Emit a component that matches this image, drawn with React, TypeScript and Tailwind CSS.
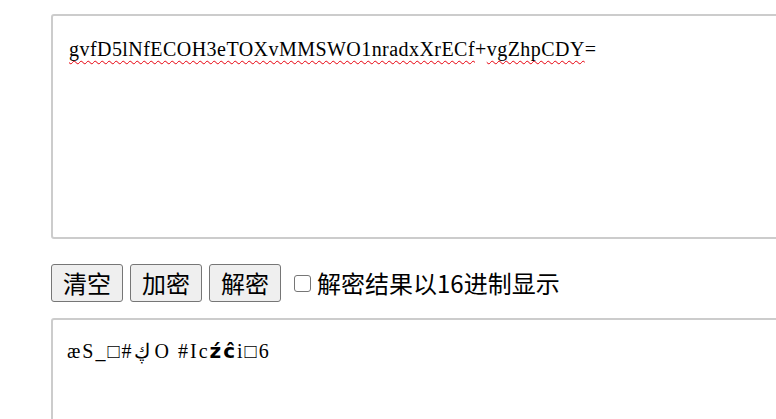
import { useState } from 'react';

const cjk = { fontFamily: '"Noto Sans CJK SC", "Noto Sans", sans-serif' };
const serif = { fontFamily: '"Liberation Serif", serif' };

const wavy = 'underline decoration-red-600 decoration-wavy decoration-1 underline-offset-[4px]';

export default function App() {
  const [hex, setHex] = useState(false);

  return (
    <div className="h-[419px] w-[776px] overflow-hidden bg-white pl-[51px] pt-[14px]">
      <div
        className="h-[225px] w-[800px] rounded-[3px] border-2 border-[#cccccc] pl-[16px] pt-[22px] text-[20px] leading-[23px] tracking-[0.45px] text-black"
        style={serif}
      >
        <span className={wavy}>gvfD5lNfECOH3eTOXvMMSWO1nradxXrECf</span>+
        <span className={wavy}>vgZhpCDY</span>=
      </div>

      <div className="mt-[25px] flex h-[38px] items-center" style={cjk}>
        {['清空', '加密', '解密'].map((t) => (
          <button
            key={t}
            className="mr-[7px] flex h-[38px] w-[72px] items-center justify-center rounded-[3px] border border-[#767676] bg-[#efefef] text-[24px] leading-none text-black"
          >
            {t}
          </button>
        ))}
        <label className="ml-[6px] flex items-center text-[24px] leading-none text-black">
          <span
            onClick={() => setHex(!hex)}
            className={
              'mr-[6px] inline-block h-[17px] w-[17px] shrink-0 rounded-[3px] border border-[#767676] ' +
              (hex ? 'bg-blue-600' : 'bg-white')
            }
          />
          解密结果以16进制显示
        </label>
      </div>

      <div
        className="mt-[16px] h-[200px] w-[800px] rounded-[3px] border-2 border-[#cccccc] pl-[14px] pt-[20px] text-[20px] leading-[23px] tracking-[2px] text-black"
        style={serif}
      >
        æS_□#ڮ Ο #Ic
        <span className="font-bold" style={{ fontFamily: '"DejaVu Sans", sans-serif' }}>
          źĉ
        </span>
        i□6
      </div>
    </div>
  );
}
